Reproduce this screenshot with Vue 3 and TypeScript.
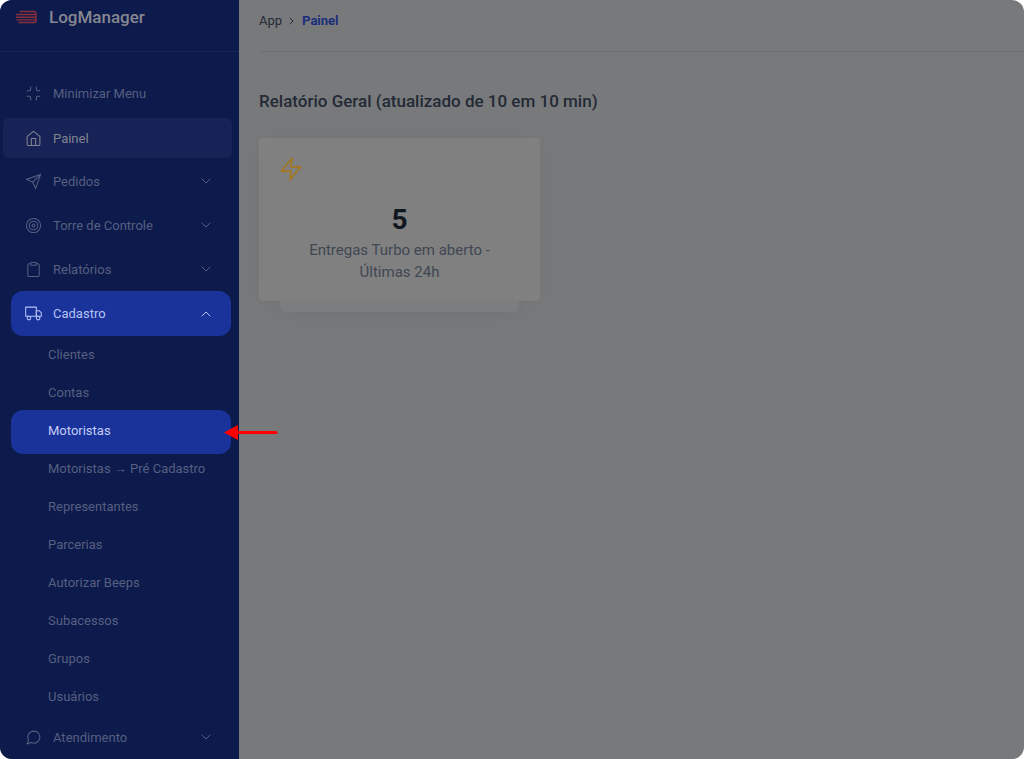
<script setup lang="ts">
import { ref } from 'vue'

interface MenuItem {
  label: string
  icon: string[]
  group?: boolean
  children?: string[]
}

const items: MenuItem[] = [
  {
    label: 'Minimizar Menu',
    icon: ['M8 3v3a2 2 0 0 1-2 2H3', 'M21 8h-3a2 2 0 0 1-2-2V3', 'M3 16h3a2 2 0 0 1 2 2v3', 'M16 21v-3a2 2 0 0 1 2-2h3'],
  },
  {
    label: 'Painel',
    icon: ['M3 9l9-7 9 7v11a2 2 0 0 1-2 2H5a2 2 0 0 1-2-2z', 'M9 22V12h6v10'],
  },
  { label: 'Pedidos', group: true, icon: ['M22 2L11 13', 'M22 2l-7 20-4-9-9-4z'] },
  {
    label: 'Torre de Controle',
    group: true,
    icon: [
      'M2 12a10 10 0 1 0 20 0a10 10 0 1 0-20 0',
      'M6 12a6 6 0 1 0 12 0a6 6 0 1 0-12 0',
      'M10 12a2 2 0 1 0 4 0a2 2 0 1 0-4 0',
    ],
  },
  {
    label: 'Relatórios',
    group: true,
    icon: [
      'M16 4h2a2 2 0 0 1 2 2v14a2 2 0 0 1-2 2H6a2 2 0 0 1-2-2V6a2 2 0 0 1 2-2h2',
      'M9 2h6a1 1 0 0 1 1 1v2a1 1 0 0 1-1 1H9a1 1 0 0 1-1-1V3a1 1 0 0 1 1-1z',
    ],
  },
  {
    label: 'Cadastro',
    group: true,
    icon: [
      'M1 3h15v13H1z',
      'M16 8h4l3 3v5h-7z',
      'M3 18.500a2.500 2.500 0 1 0 5 0a2.500 2.500 0 1 0-5 0',
      'M16 18.500a2.500 2.500 0 1 0 5 0a2.500 2.500 0 1 0-5 0',
    ],
    children: [
      'Clientes',
      'Contas',
      'Motoristas',
      'Motoristas → Pré Cadastro',
      'Representantes',
      'Parcerias',
      'Autorizar Beeps',
      'Subacessos',
      'Grupos',
      'Usuários',
    ],
  },
  {
    label: 'Atendimento',
    group: true,
    icon: [
      'M21 11.500a8.380 8.380 0 0 1-.9 3.800 8.500 8.500 0 0 1-7.600 4.700 8.380 8.380 0 0 1-3.800-.9L3 21l1.900-5.700a8.380 8.380 0 0 1-.9-3.800 8.500 8.500 0 0 1 4.700-7.600 8.380 8.380 0 0 1 3.800-.9h.5a8.480 8.480 0 0 1 8 8v.5z',
    ],
  },
]

const current = 'Painel'
const highlighted = 'Motoristas'
const open = ref<string>('Cadastro')

function toggle(item: MenuItem) {
  if (item.group) open.value = open.value === item.label ? '' : item.label
}
</script>

<template>
  <div class="app">
    <aside class="sidebar">
      <header class="brand">
        <svg class="logo" viewBox="0 0 21 14" aria-hidden="true">
          <path d="M4 1.500h14q2 0 2 2v7q0 2-2 2H3M0 4.500h19.500M0 7.200h19.500M1 9.900h18.500" />
        </svg>
        <span>LogManager</span>
      </header>
      <nav aria-label="Menu principal">
        <ul class="menu">
          <li v-for="item in items" :key="item.label">
            <button
              type="button"
              class="row"
              :class="{ current: item.label === current, open: item.label === open }"
              :aria-expanded="item.group ? item.label === open : undefined"
              @click="toggle(item)"
            >
              <svg class="icon" viewBox="0 0 24 24" aria-hidden="true">
                <path v-for="d in item.icon" :key="d" :d="d" />
              </svg>
              <span class="label">{{ item.label }}</span>
              <svg v-if="item.group" class="chevron" viewBox="0 0 12 12" aria-hidden="true">
                <path :d="item.label === open ? 'M2 8l4-4 4 4' : 'M2 4l4 4 4-4'" />
              </svg>
            </button>
            <ul v-if="item.children && item.label === open" class="submenu">
              <li v-for="child in item.children" :key="child">
                <a href="#" :class="{ highlighted: child === highlighted }" @click.prevent>{{ child }}</a>
                <svg v-if="child === highlighted" class="pointer" viewBox="0 0 54 16" aria-hidden="true">
                  <path class="shaft" d="M12 8.500H52" />
                  <path class="head" d="M0 8.500L14 1v15z" />
                </svg>
              </li>
            </ul>
          </li>
        </ul>
      </nav>
    </aside>

    <main class="content">
      <nav class="breadcrumb" aria-label="Navegação">
        <a href="#" @click.prevent>App</a>
        <svg viewBox="0 0 12 12" aria-hidden="true"><path d="M4 3l3 3-3 3" /></svg>
        <a href="#" class="here" aria-current="page" @click.prevent>Painel</a>
      </nav>
      <h1>Relatório Geral (atualizado de 10 em 10 min)</h1>
      <article class="card">
        <svg class="zap" viewBox="0 0 24 24" aria-hidden="true">
          <path d="M13 2L3 14h9l-1 8 10-12h-9z" />
        </svg>
        <strong>5</strong>
        <p>Entregas Turbo em aberto - Últimas 24h</p>
      </article>
    </main>
  </div>
</template>

<style>
body {
  background: #ffffff;
}
</style>

<style scoped>
.app {
  display: flex;
  min-height: 100vh;
  overflow: hidden;
  border-radius: 12px;
  background: #78797b;
  font-family: Roboto, "Noto Sans", sans-serif;
  font-size: 13px;
}

ul {
  margin: 0;
  padding: 0;
  list-style: none;
}

svg {
  flex: none;
  fill: none;
  stroke: currentColor;
  stroke-linecap: round;
  stroke-linejoin: round;
}

a {
  color: inherit;
  text-decoration: none;
}

.sidebar {
  flex: none;
  width: 239px;
  background: #0d1a4c;
  color: #565f80;
}

.brand {
  display: flex;
  align-items: center;
  gap: 12px;
  height: 52px;
  padding: 0 16px 18px;
  box-sizing: border-box;
  border-bottom: 1px solid #172557;
  color: #858790;
  font-size: 17px;
  font-weight: 500;
}

.logo {
  width: 21px;
  height: 14px;
  color: #88303a;
  stroke-width: 1.4;
}

.menu {
  padding-top: 19px;
}

.row {
  display: flex;
  align-items: center;
  width: 220px;
  height: 44px;
  margin-left: 11px;
  padding: 0 19px 0 14px;
  border: 0;
  border-radius: 12px;
  background: none;
  color: inherit;
  font: inherit;
  text-align: left;
}

.icon {
  width: 17px;
  height: 17px;
  margin-right: 11px;
  stroke-width: 1.5;
}

.label {
  flex: 1;
}

.chevron {
  width: 12px;
  height: 12px;
}

.row.current {
  width: 229px;
  height: 40px;
  margin: 3px 0 1px 3px;
  padding-left: 22px;
  border-radius: 6px;
  background: #172356;
  color: #80838f;
}

.row.open {
  height: 45px;
  background: #1a339b;
  color: #b5c2f5;
}

.submenu {
  margin-bottom: -1px;
}

.submenu li {
  position: relative;
  height: 38px;
}

.submenu a {
  display: block;
  padding-left: 48px;
  line-height: 38px;
  white-space: nowrap;
}

.submenu .highlighted {
  position: relative;
  color: #c3cdf6;
  z-index: 0;
}

.submenu .highlighted::before {
  content: "";
  position: absolute;
  z-index: -1;
  top: -2px;
  left: 11px;
  width: 220px;
  height: 44px;
  border-radius: 12px;
  background: #1a339b;
}

.pointer {
  position: absolute;
  z-index: 1;
  top: 12px;
  left: 224px;
  width: 54px;
  height: 16px;
}

.shaft {
  stroke: #ff0000;
  stroke-width: 3;
}

.head {
  fill: #ff0000;
  stroke: none;
}

.content {
  flex: 1;
  min-width: 0;
  padding-left: 20px;
  color: #232a36;
}

.breadcrumb {
  display: flex;
  align-items: center;
  gap: 4px;
  height: 52px;
  padding-bottom: 10px;
  box-sizing: border-box;
  border-bottom: 1px solid #6b6f78;
}

.breadcrumb svg {
  width: 12px;
  height: 12px;
}

.here {
  color: #1a2e7a;
  font-weight: 700;
}

h1 {
  margin: 38px 0 26px;
  font-size: 17px;
  font-weight: 500;
  line-height: 22px;
}

.card {
  position: relative;
  width: 281px;
  padding: 18px 20px;
  box-sizing: border-box;
  border-radius: 4px;
  background: #808080;
  box-shadow: 0 3px 20px rgba(0, 0, 0, 0.05);
  text-align: center;
}

.card::after {
  content: "";
  position: absolute;
  top: 100%;
  left: 21px;
  right: 21px;
  height: 11px;
  border-radius: 0 0 6px 6px;
  background: #7c7d7e;
  box-shadow: 0 6px 16px rgba(0, 0, 0, 0.04);
}

.zap {
  display: block;
  width: 26px;
  height: 26px;
  margin-left: -1px;
  color: #a4771c;
  stroke-width: 1.5;
}

.card strong {
  display: block;
  margin-top: 20px;
  color: #10171f;
  font-size: 28px;
  font-weight: 700;
  line-height: 35px;
}

.card p {
  margin: 2px 24px 0;
  color: #3f4752;
  font-size: 15px;
  line-height: 22px;
}
</style>
